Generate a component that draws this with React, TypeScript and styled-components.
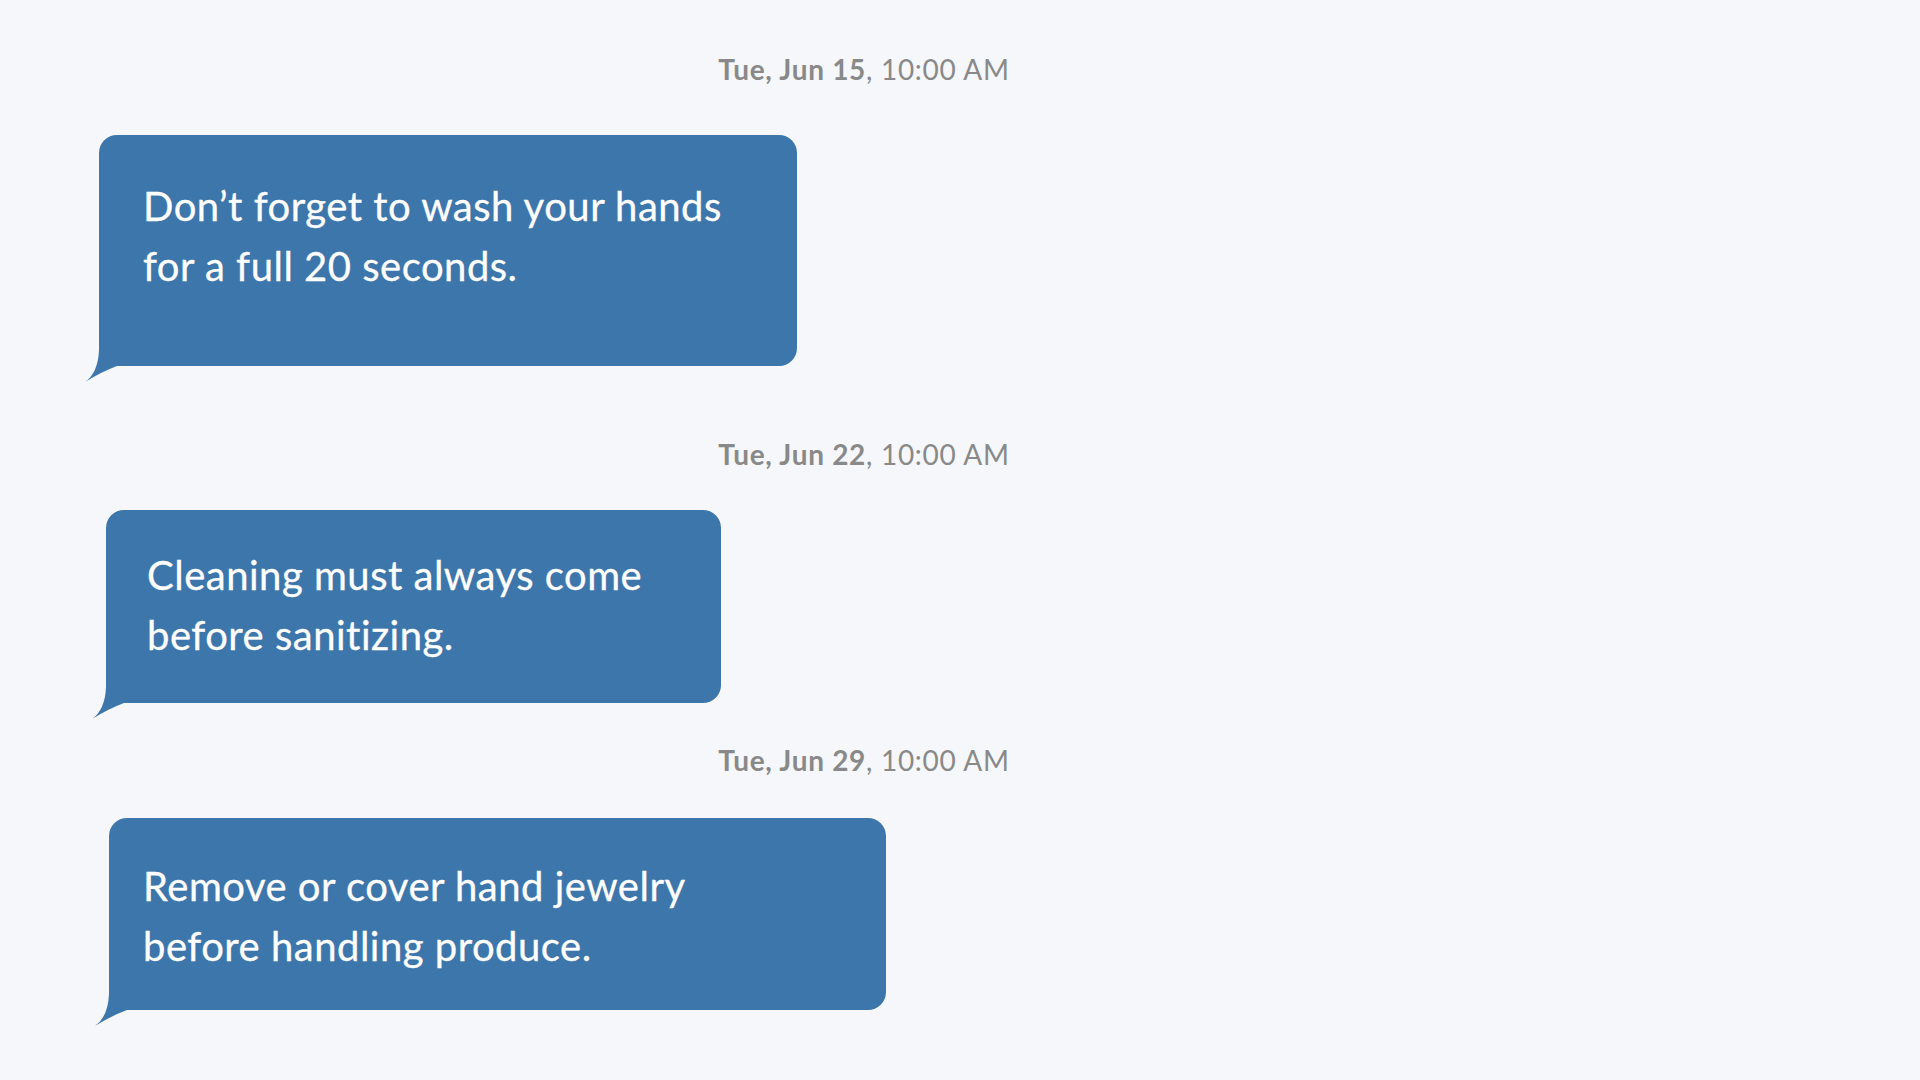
import styled, { createGlobalStyle } from "styled-components";

const GlobalStyle = createGlobalStyle`
    html, body {
        margin: 0;
        padding: 0;
        background: #f5f7fa;
    }
    body {
        font-family: "Lato", "Noto Sans", sans-serif;
    }
`;

const Page = styled.main`
    width: 1920px;
    height: 1080px;
    overflow: hidden;
    background: #f5f7fa;
`;

const Thread = styled.section`
    width: 1728px;
    display: flex;
    flex-direction: column;
`;

const Stamp = styled.div<{ $gap: number }>`
    margin-top: ${(p) => p.$gap}px;
    height: 32px;
    line-height: 32px;
    text-align: center;
    font-size: 28px;
    letter-spacing: 0.7px;
    color: #898989;
    b {
        font-weight: 700;
    }
`;

const Bubble = styled.div<{
    $gap: number;
    $left: number;
    $width: number;
    $height: number;
    $padTop: number;
    $padLeft: number;
}>`
    position: relative;
    box-sizing: border-box;
    margin-top: ${(p) => p.$gap}px;
    margin-left: ${(p) => p.$left}px;
    width: ${(p) => p.$width}px;
    height: ${(p) => p.$height}px;
    padding: ${(p) => p.$padTop}px 20px 0 ${(p) => p.$padLeft}px;
    background: #3d76ab;
    border-radius: 18px 18px 18px 0;
    color: #ffffff;
    font-size: 40px;
    letter-spacing: 0.5px;
    line-height: 60px;
    white-space: nowrap;
    -webkit-text-stroke: 0.3px #ffffff;
`;

const Tail = styled.svg`
    position: absolute;
    left: -14px;
    bottom: -16px;
    width: 34px;
    height: 34px;
`;

function BubbleTail() {
    return (
        <Tail viewBox="0 0 34 34">
            <path d="M14 0 L14 2 Q13 25 0 34 Q16 24 32 18 L32 0 Z" fill="#3d76ab" />
        </Tail>
    );
}

const messages = [
    {
        day: "Tue, Jun 15",
        stampGap: 53,
        bubble: { gap: 50, left: 99, width: 698, height: 231, padTop: 41, padLeft: 44 },
        lines: ["Don’t forget to wash your hands", "for a full 20 seconds."],
    },
    {
        day: "Tue, Jun 22",
        stampGap: 72,
        bubble: { gap: 40, left: 106, width: 615, height: 193, padTop: 35, padLeft: 41 },
        lines: ["Cleaning must always come", "before sanitizing."],
    },
    {
        day: "Tue, Jun 29",
        stampGap: 41,
        bubble: { gap: 42, left: 109, width: 777, height: 192, padTop: 38, padLeft: 34 },
        lines: ["Remove or cover hand jewelry", "before handling produce."],
    },
];

export default function App() {
    return (
        <Page>
            <GlobalStyle />
            <Thread>
                {messages.map((m) => (
                    <div key={m.day}>
                        <Stamp $gap={m.stampGap}>
                            <b>{m.day}</b>, 10:00 AM
                        </Stamp>
                        <Bubble
                            $gap={m.bubble.gap}
                            $left={m.bubble.left}
                            $width={m.bubble.width}
                            $height={m.bubble.height}
                            $padTop={m.bubble.padTop}
                            $padLeft={m.bubble.padLeft}
                        >
                            {m.lines.map((l) => (
                                <div key={l}>{l}</div>
                            ))}
                            <BubbleTail />
                        </Bubble>
                    </div>
                ))}
            </Thread>
        </Page>
    );
}
